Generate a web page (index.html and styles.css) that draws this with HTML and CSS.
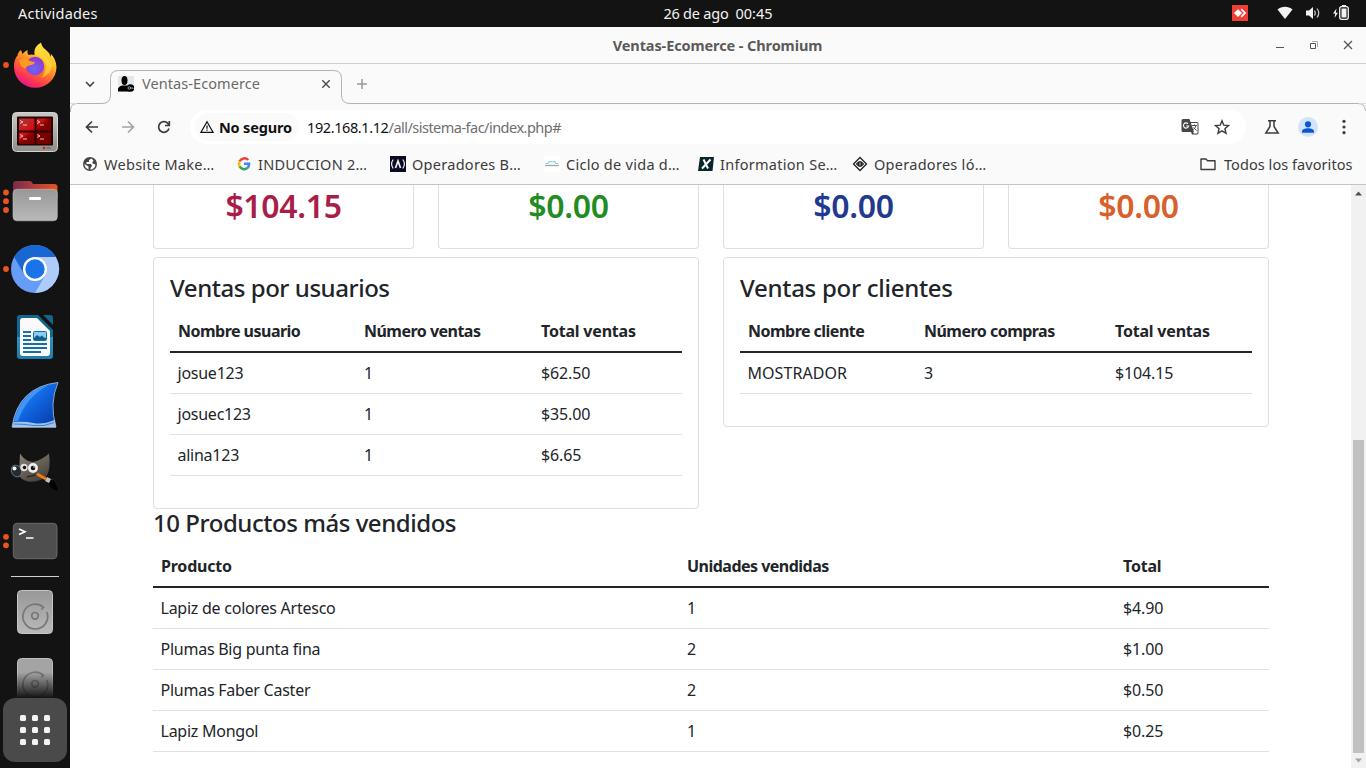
FILE: index.html
```html
<!DOCTYPE html>
<html lang="es">
<head>
<meta charset="utf-8">
<title>Ventas-Ecomerce</title>
<link rel="stylesheet" href="styles.css">
</head>
<body>
<div class="desktop">
  <header class="topbar">
    <span class="activities">Actividades</span>
    <span class="clock"><span>26 de ago</span><span class="time">00:45</span></span>
    <svg class="tray" viewBox="0 0 134 27">
      <rect y="5" width="16" height="16" fill="#ef3e35"/>
      <path d="M6 9.200 10 13l-4 3.900L2 13z" fill="#fff"/><path d="m8.600 9.700 1.200-1.100 4.400 4.400-4.400 4.400-1.200-1.100 3.200-3.300z" fill="#fff"/>
      <path d="M45.500 9.400c4.200-3.400 10.800-3.400 15 0L53 18.900z" fill="#f2f2f2"/>
      <path d="M74 10.500h3L81 7v12l-4-3.500h-3z" fill="#f2f2f2"/>
      <path d="M82.500 10.500q1.700 2.500 0 5M85 8.500q3.500 4.500 0 9" fill="none" stroke="#c8c8c8" stroke-width="1.200"/>
      <path d="m104.500 8.500-3.500 5h2.200l-.7 4.500 3.500-5.200h-2.200z" fill="#f2f2f2"/>
      <rect x="107.700" y="6.700" width="8.600" height="12.600" rx="2" fill="none" stroke="#f2f2f2" stroke-width="1.300"/>
      <rect x="109.500" y="8.500" width="5" height="9" fill="#f2f2f2"/><rect x="110" y="5" width="4" height="1.500" fill="#f2f2f2"/>
    </svg>
  </header>
  <div class="workspace">
    <nav class="dock">
      <svg class="slot" viewBox="0 0 70 68">
        <defs>
          <linearGradient id="ff" x1=".85" y1="0" x2=".3" y2="1"><stop offset="0" stop-color="#fff24a"/><stop offset=".35" stop-color="#ffc02a"/><stop offset=".62" stop-color="#ff6a2c"/><stop offset=".85" stop-color="#fb2f5c"/><stop offset="1" stop-color="#e0158c"/></linearGradient>
          <radialGradient id="fp" cx=".45" cy=".65" r=".6"><stop offset="0" stop-color="#6a6af4"/><stop offset="1" stop-color="#9137d2"/></radialGradient>
        </defs>
        <circle cx="6" cy="34" r="2.900" fill="#e95420"/>
        <path d="M17.500 25q0-3.500 3.500-6l1.500 4q2-2.500 5-4-.5 3 1 5 3-1 6 0-1.500-8 6.500-12.500 .5 4 4.500 7t5.500 7.500q.5-2-.5-3.500 5.500 5 6 13.500A21 20.500 0 1 1 14 36q-.300-6.500 3-11z" fill="url(#ff)"/>
        <path d="M41 12q-7 5-6 12 9 2 10.500 9t-4.500 14q10-3 11-13-2.500-5-6-8-4-5-5-14z" fill="#ffe23c" opacity=".6"/>
        <circle cx="35" cy="35" r="9.200" fill="url(#fp)"/>
        <path d="M19 29.500q6-4 11 .5 3 1 5 1-1 3-6 3.500-3 1-4 3-5-2-6-8z" fill="#ff9a21"/>
      </svg>
      <svg class="slot" viewBox="0 0 70 68">
        <defs><linearGradient id="tm" x1="0" y1="0" x2="1" y2="1"><stop offset="0" stop-color="#a83a3a"/><stop offset=".4" stop-color="#d40f0f"/><stop offset=".5" stop-color="#850000"/><stop offset="1" stop-color="#6f0000"/></linearGradient>
        <linearGradient id="tf" x2="0" y2="1"><stop offset="0" stop-color="#c9cac5"/><stop offset="1" stop-color="#8e8f8a"/></linearGradient></defs>
        <rect x="12.500" y="13.500" width="45" height="39" rx="4" fill="url(#tf)" stroke="#d3d3cf"/>
        <rect x="17" y="17.500" width="36" height="29" rx="1" fill="#250506"/>
        <rect x="19" y="19.500" width="32" height="25.500" fill="url(#tm)"/>
        <path d="M35.500 19v27M18 32.500h34" stroke="#300" stroke-width="2"/>
        <path d="m20 21.500 3 1.500-3 1.500m3 1.500h4M37 21.500l3 1.500-3 1.500m3 1.500h4M20 35.500l3 1.500-3 1.500m3 1.500h4M37 35.500l3 1.500-3 1.500m3 1.500h4" fill="none" stroke="#f6d6d6" stroke-width=".9"/>
        <circle cx="44" cy="49" r="1.300" fill="#f01010"/><rect x="46.500" y="48" width="4" height="2" fill="#777"/>
      </svg>
      <svg class="slot" viewBox="0 0 70 68">
        <defs><linearGradient id="fo"><stop offset="0" stop-color="#7b2a50"/><stop offset="1" stop-color="#e9541f"/></linearGradient><linearGradient id="gr" x2="0" y2="1"><stop offset="0" stop-color="#989898"/><stop offset="1" stop-color="#b9b9b9"/></linearGradient></defs>
        <g fill="#e95420"><circle cx="6" cy="25.500" r="2.900"/><circle cx="6" cy="34.200" r="2.900"/><circle cx="6" cy="43" r="2.900"/></g>
        <path d="M13 30V17q0-3 3-3h14q1.500 0 3 3h21q3.500 0 3.500 3v10z" fill="url(#fo)"/>
        <rect x="13" y="22.300" width="44.300" height="31.500" rx="4" fill="url(#gr)" stroke="#c2c2c2" stroke-width=".6"/>
        <rect x="29" y="30" width="12" height="3" rx="1.200" fill="#fff"/>
      </svg>
      <svg class="slot" viewBox="0 0 70 68">
        <circle cx="6" cy="34" r="2.900" fill="#e95420"/>
        <circle cx="35" cy="34" r="24" fill="#669df6"/>
        <path d="M35 22h20.800A24 24 0 0 1 35 58l10.400-18z" fill="#aecbfa"/>
        <path d="M14.200 22A24 24 0 0 1 55.800 22H35a12 12 0 0 0-10.400 18z" fill="#1967d2"/>
        <circle cx="35" cy="34" r="12" fill="#fff"/><circle cx="35" cy="34" r="9.700" fill="#1a73e8"/>
      </svg>
      <svg class="slot" viewBox="0 0 70 68">
        <defs><linearGradient id="wr" x2="0" y2="1"><stop offset=".5" stop-color="#0f6893"/><stop offset=".5" stop-color="#3191c4"/><stop offset="1" stop-color="#1b7dae"/></linearGradient></defs>
        <path d="M43 12h7q3 0 3 3v7z" fill="#15648c"/>
        <path d="M20 12h18l15 15v26q0 3-3 3H20q-3 0-3-3V15q0-3 3-3z" fill="url(#wr)"/>
        <path d="M22.500 15H37l13 13v22q0 3-3 3H22.500q-2.500 0-2.500-3V18q0-3 2.500-3z" fill="#fafafa"/>
        <path d="M23 29h8M23 33h8M23 37h8M23 41h24M23 45h24M23 49h18" stroke="#1272a5" stroke-width="2"/>
        <rect x="33.500" y="28.500" width="13" height="9" rx="1" fill="#8acbf4" stroke="#1272a5"/><path d="M34 37v-2l3-3 3 2 2-1.500 2 2 2 .5v2z" fill="#115e8d"/>
      </svg>
      <svg class="slot" viewBox="0 0 70 68">
        <defs><linearGradient id="ws" x2="1" y2="1"><stop offset="0" stop-color="#3a9bfa"/><stop offset=".5" stop-color="#0f64df"/><stop offset="1" stop-color="#0535a0"/></linearGradient></defs>
        <path d="M12 56Q18 16 58 11.500q-9 21-2 44.500z" fill="url(#ws)" stroke="#a6c8ea" stroke-width=".8"/>
        <path d="M14 50Q22 20 48 14.500 26 26 18 50z" fill="#5caeff" opacity=".6"/>
        <path d="M12.500 56.500 13.500 51q11-1 20 1t21-3l1.500 7.500z" fill="#b9d6f2" opacity=".85"/><path d="M14 53q10 0 20 1.500t20-3" fill="none" stroke="#3d82d0"/>
      </svg>
      <svg class="slot" viewBox="0 0 70 68">
        <defs><linearGradient id="gp" x2=".6" y2="1"><stop offset="0" stop-color="#89837a"/><stop offset="1" stop-color="#4a433a"/></linearGradient></defs>
        <path d="M20 14.500q5 8 13 8.500 9-2 16-8.500 2 14-2 22-6 7-19 6-8-2-9-7z" fill="url(#gp)"/>
        <ellipse cx="16.500" cy="32" rx="5" ry="6" fill="#252b31" stroke="#66717c" transform="rotate(-25 16.500 32)"/><circle cx="14.500" cy="29.500" r="2" fill="#fff"/>
        <circle cx="24" cy="28.500" r="3.700" fill="#ddd"/><circle cx="24.500" cy="28.500" r="1.700" fill="#111"/><circle cx="33" cy="29" r="5" fill="#eee"/><circle cx="33" cy="29" r="2.300" fill="#151515"/><circle cx="34" cy="28" r=".7" fill="#fff"/>
        <path d="m27 38 9-2" stroke="#2d2721" stroke-width="1.300"/><path d="m37 35 9 5" stroke="#ed7d17" stroke-width="3"/><path d="m46 40 6 3" stroke="#c0c0c0" stroke-width="4.500"/><path d="M51 40q5 2 7 12-9-2-9-8z" fill="#020202"/>
      </svg>
      <svg class="slot" viewBox="0 0 70 68">
        <circle cx="6" cy="29.800" r="2.900" fill="#e95420"/><circle cx="6" cy="38.300" r="2.900" fill="#e95420"/>
        <rect x="13.300" y="16.300" width="43.700" height="35.400" rx="4" fill="#4e4e4e" stroke="#6a6a6a"/>
        <path d="m19 22 6 2.700-6 2.700M26 31h7.500" fill="none" stroke="#fff" stroke-width="1.600"/>
      </svg>
      <hr class="dock-rule">
      <svg class="slot" viewBox="0 0 70 68">
        <rect x="17.500" y="12.500" width="35" height="43" rx="4" fill="url(#gr)" stroke="#c6c6c6"/>
        <path d="M41.300 31.500 43.500 29.300A12.400 12.400 0 1 0 46.800 34" fill="none" stroke="#777" stroke-width="1.700"/><circle cx="35" cy="37.800" r="3.300" fill="none" stroke="#777" stroke-width="1.700"/>
      </svg>
      <svg class="slot" viewBox="0 0 70 68">
        <defs><linearGradient id="fd" x2="0" y2="1"><stop offset=".35" stop-color="#141414" stop-opacity="0"/><stop offset=".9" stop-color="#141414"/></linearGradient></defs>
        <rect x="17.500" y="12.500" width="35" height="43" rx="4" fill="#a4a4a4" stroke="#c0c0c0"/>
        <path d="M41.300 31.500 43.500 29.300A12.400 12.400 0 1 0 46.800 34" fill="none" stroke="#777" stroke-width="1.700"/><circle cx="35" cy="37.800" r="3.300" fill="none" stroke="#777" stroke-width="1.700"/>
        <rect x="15" y="10" width="40" height="46.500" fill="url(#fd)"/>
      </svg>
      <div class="apps"><i></i><i></i><i></i><i></i><i></i><i></i><i></i><i></i><i></i></div>
    </nav>
    <main class="window">
      <div class="titlebar">
        <span class="title">Ventas-Ecomerce - Chromium</span>
        <svg class="winbtns" viewBox="0 0 96 36" fill="none" stroke="#555">
          <path d="M6 20.500h8M40.500 16.500h5v5h-5z"/><path d="M42 14.500h5.500V20" stroke="#aaa"/><path d="m74 14 8 8m0-8-8 8" stroke-width="1.300"/>
        </svg>
      </div>
      <div class="tabstrip">
        <svg class="tabshape" viewBox="0 0 1296 48" fill="none" stroke="#b2b2b2">
          <path d="M.5 48v-1Q.5 39.500 7 39.500h25q8.500 0 8.500-8.500V14.500q0-8 8-8h215q8 0 8 8V31q0 8.500 8.500 8.500h1008q7 0 7.500 7.500"/>
          <path d="M0 39.500h7M1289 39.500h7" stroke="#dcdcdc"/>
        </svg>
        <svg class="chevron" viewBox="0 0 12 12" fill="none" stroke="#474747" stroke-width="1.600"><path d="m2 4 4 4 4-4"/></svg>
        <svg class="favicon" viewBox="0 0 16 16"><path fill="#e6e6e6" d="M0 0h16v16H0z"/><ellipse cx="6.500" cy="4.500" rx="3" ry="4.500"/><path d="M0 15.500V13q0-2 4-3.500h5q3 1 3 3v3z"/><circle cx="12.500" cy="12" r="3.800"/><circle cx="11.300" cy="12" r="1.300" fill="none" stroke="#ddd" stroke-width=".7"/><path d="M12.500 12h2.500v1" stroke="#ddd" stroke-width=".7" fill="none"/></svg>
        <span class="tabname">Ventas-Ecomerce</span>
        <svg class="tabclose" viewBox="0 0 10 10" stroke="#4d4d4d" stroke-width="1.400"><path d="m1.300 1.300 7.400 7.400m0-7.400L1.300 8.700"/></svg>
        <svg class="newtab" viewBox="0 0 12 12" stroke="#999" stroke-width="1.500"><path d="M6 1v10M1 6h10"/></svg>
      </div>
      <div class="toolbar">
        <div class="nav">
          <svg viewBox="0 0 16 16" fill="none" stroke="#3c3c3c" stroke-width="1.700"><path d="M14 8H3M8 2.500 2.500 8 8 13.500"/></svg>
          <svg viewBox="0 0 16 16" fill="none" stroke="#a5a5a5" stroke-width="1.700"><path d="M2 8h11M8 2.500 13.500 8 8 13.500"/></svg>
          <svg viewBox="0 0 16 16" fill="none" stroke="#3c3c3c" stroke-width="1.700"><path d="M13 9.500A5.300 5.300 0 1 1 12.300 5L13 6"/><path d="M13.300 2v4.500H9"/></svg>
        </div>
        <div class="omnibox">
          <div class="chip">
            <svg viewBox="0 0 14 14" fill="none" stroke="#111" stroke-width="1.200"><path d="M7 1.700 13 12.300H1z"/><path d="M7 5.500v3.200M7 9.600v1.200"/></svg>
            <span>No seguro</span>
          </div>
          <span class="url"><span class="host">192.168.1.12</span>/all/sistema-fac/index.php#</span>
          <svg class="translate" viewBox="0 0 18 18"><path d="M2 1h6.500l1 3H16q1.500 0 1.500 1.500V15q0 1.500-1.500 1.500h-5L10 14H2Q.5 14 .5 12.500v-10Q.5 1 2 1z" fill="#474747"/><path d="M9.900 5H16q.5 0 .5.500V15q0 .5-.5.500h-3l-1-1.500h1z" fill="#fff"/><path d="M7 5.800A2.600 2.600 0 1 0 7.600 8H5.300" fill="none" stroke="#fff" stroke-width="1.100"/><path d="M11 7.500h5M13.500 6.500v1M15 7.500q-.5 3-3.500 4.500M12.500 9.500l3 3" fill="none" stroke="#555"/></svg>
          <svg class="star" viewBox="0 0 16 16" fill="none" stroke="#3c3c3c" stroke-width="1.400"><path d="m8 1.800 1.800 4.400 4.700.4-3.600 3.100 1.100 4.600L8 11.800l-4 2.500 1.100-4.600L1.500 6.600l4.700-.4z"/></svg>
        </div>
        <svg class="flask" viewBox="0 0 16 16" fill="none" stroke="#3c3c3c" stroke-width="1.500"><path d="M4 1.800h8M6 2v5.500L1.800 14h12.400L10 7.500V2"/></svg>
        <svg class="avatar" viewBox="0 0 20 20"><circle cx="10" cy="10" r="10" fill="#d3e3fd"/><circle cx="10" cy="7.300" r="3.100" fill="#0b57d0"/><path d="M4 15.700v-1.400c0-4 12-4 12 0v1.400z" fill="#0b57d0"/></svg>
        <svg class="kebab" viewBox="0 0 4 16" fill="#3c3c3c"><circle cx="2" cy="2.300" r="1.600"/><circle cx="2" cy="8" r="1.600"/><circle cx="2" cy="13.700" r="1.600"/></svg>
      </div>
      <div class="bookmarks">
        <span class="bm"><svg viewBox="0 0 16 16"><circle cx="8" cy="8" r="7" fill="#454545"/><path d="M9.500 2.500 7 4v2H4.500v2H9l1 2-1.500 2v1.800Q13 13 13.500 8.500l-3-1V6l1-1.500z" fill="#fff"/><path d="m2.500 8 4 2.500v3Q2.500 12 2.500 8z" fill="#fff"/></svg><span>Website Make…</span></span>
        <span class="bm"><svg viewBox="0 0 16 16" fill="none" stroke-width="2.500"><path d="M12.200 4A5.300 5.300 0 0 0 3.600 5.300" stroke="#ea4335"/><path d="M3.600 5.300a5.300 5.300 0 0 0 0 5" stroke="#fbbc05"/><path d="M3.600 10.300a5.300 5.300 0 0 0 7.800 1.800" stroke="#34a853"/><path d="M8 7.800h5.100q0 3-1.700 4.300" stroke="#4285f4"/></svg><span>INDUCCION 2…</span></span>
        <span class="bm"><svg viewBox="0 0 16 16" fill="none"><path fill="#0a0a23" d="M0 0h16v16H0z"/><path d="M3.200 3.500Q0 8 3.200 12.500M12.800 3.500q3.200 4.500 0 9" stroke="#eee" stroke-width="1.200"/><path d="m5.500 12 2.500-7 2.500 7M8 5v3" stroke="#eee" stroke-width="1.700"/></svg><span>Operadores B…</span></span>
        <span class="bm"><svg viewBox="0 0 16 16" fill="none"><path fill="#fff" d="M0 0h16v16H0z"/><path d="M1.500 7.500H4Q5 4.500 8 6q3-1.500 4 1.500h2" stroke="#8bd0e4" stroke-width="1.200"/><path d="M1 9.500h14" stroke="#a2a2a2" stroke-width="1.300"/></svg><span>Ciclo de vida d…</span></span>
        <span class="bm"><svg viewBox="0 0 16 16" fill="none"><path fill="#0b262b" d="M2 1h14l-1.500 14H0z"/><path d="m5.500 3.500 4.500 9M12.500 3.500l-8.500 9" stroke="#fff" stroke-width="2"/></svg><span>Information Se…</span></span>
        <span class="bm"><svg viewBox="0 0 16 16" fill="none" stroke="#222"><path d="m8 1.500 6.500 6.500L8 14.500 1.500 8z" stroke-width="1.300"/><path d="m4.500 8 2-2h3l2 2-2 2h-3zM6.500 6v4M9.500 6v4M8 5v6" stroke-width="1.100"/></svg><span>Operadores ló…</span></span>
        <span class="bm all"><svg viewBox="0 0 16 16" fill="none" stroke="#3c3c3c" stroke-width="1.400"><path d="M1 3h5l1.500 1.700H15V13.500H1z" stroke-linejoin="round"/></svg><span>Todos los favoritos</span></span>
      </div>
      <div class="viewport">
        <div class="page">
          <div class="cards">
            <div class="card"><h2 class="crimson">$104.15</h2></div>
            <div class="card"><h2 class="green">$0.00</h2></div>
            <div class="card"><h2 class="navy">$0.00</h2></div>
            <div class="card"><h2 class="orange">$0.00</h2></div>
          </div>
          <div class="panels">
            <section class="panel">
              <h4>Ventas por usuarios</h4>
              <table class="table users">
                <thead><tr><th>Nombre usuario</th><th>Número ventas</th><th class="loose">Total ventas</th></tr></thead>
                <tbody>
                  <tr><td>josue123</td><td>1</td><td>$62.50</td></tr>
                  <tr><td>josuec123</td><td>1</td><td>$35.00</td></tr>
                  <tr><td>alina123</td><td>1</td><td>$6.65</td></tr>
                </tbody>
              </table>
            </section>
            <section class="panel">
              <h4 class="loose">Ventas por clientes</h4>
              <table class="table clients">
                <thead><tr><th>Nombre cliente</th><th>Número compras</th><th class="loose">Total ventas</th></tr></thead>
                <tbody><tr><td>MOSTRADOR</td><td>3</td><td>$104.15</td></tr></tbody>
              </table>
            </section>
          </div>
          <h4>10 Productos más vendidos</h4>
          <table class="table products">
            <thead><tr><th class="loose">Producto</th><th>Unidades vendidas</th><th class="loose">Total</th></tr></thead>
            <tbody>
              <tr><td>Lapiz de colores Artesco</td><td>1</td><td>$4.90</td></tr>
              <tr><td>Plumas Big punta fina</td><td>2</td><td>$1.00</td></tr>
              <tr><td>Plumas Faber Caster</td><td>2</td><td>$0.50</td></tr>
              <tr><td>Lapiz Mongol</td><td>1</td><td>$0.25</td></tr>
            </tbody>
          </table>
        </div>
        <div class="scrollbar">
          <svg viewBox="0 0 15 17"><path d="M4 10.500 7.500 6.500 11 10.500z" fill="#505050"/></svg>
          <div class="thumb"></div>
          <svg viewBox="0 0 15 15"><path d="M4 5.500h7L7.500 9.500z" fill="#a3a3a3"/></svg>
        </div>
      </div>
    </main>
  </div>
</div>
</body>
</html>
```
FILE: styles.css
```css
* { box-sizing: border-box; }
body { margin: 0; font-family: "Noto Sans", "Open Sans", sans-serif; font-size: 16px; color: #212529; overflow: hidden; }
svg { display: block; flex: none; }

.desktop { width: 1366px; height: 768px; display: flex; flex-direction: column; background: #131313; }
.topbar { height: 27px; display: flex; align-items: center; justify-content: space-between; color: #f2f2f2; font-size: 14.5px; line-height: 24px; padding: 0 0 0 18px; }
.topbar span { padding-bottom: 1px; }
.activities { width: 134px; letter-spacing: .2px; }
.clock { flex: 1; display: flex; justify-content: center; gap: 7px; margin-left: 52px; letter-spacing: -.22px; }
.time { letter-spacing: 0; }
.tray { width: 134px; height: 27px; }

.workspace { flex: 1; display: flex; min-height: 0; }
.dock { width: 70px; padding-top: 4px; position: relative; overflow: hidden; }
.slot { width: 70px; height: 68px; }
.dock-rule { width: 48px; height: 1px; margin: 1px 11px; border: 0; background: #d0d0d0; }
.apps { position: absolute; left: 3px; bottom: 6px; width: 64px; height: 64px; border-radius: 12px; background: #4a4a4a; padding: 17px; display: grid; grid-template-columns: repeat(3, 6px); gap: 6px; }
.apps i { width: 6px; height: 6px; border-radius: 1.5px; background: #f4f4f2; }

.window { flex: 1; display: flex; flex-direction: column; background: #fafafa; min-width: 0; white-space: nowrap; }
.titlebar { height: 37px; border-bottom: 1px solid #d0d0d0; display: flex; align-items: center; }
.title { flex: 1; padding-left: 95px; text-align: center; font-weight: 700; font-size: 14.5px; color: #5b5b5b; letter-spacing: -.1px; }
.winbtns { width: 96px; height: 36px; }

.tabstrip { height: 40px; display: flex; align-items: center; position: relative; padding-left: 14px; font-size: 14.5px; color: #6a6a6a; }
.tabshape { position: absolute; left: 0; top: 0; width: 1296px; height: 48px; }
.chevron { width: 12px; height: 12px; }
.favicon { width: 16px; height: 16px; margin-left: 22px; }
.tabname { width: 187px; padding: 0 0 2px 8px; letter-spacing: .07px; }
.tabclose { width: 10px; height: 10px; }
.newtab { width: 12px; height: 12px; margin-left: 25px; }

.toolbar { height: 46px; display: flex; align-items: center; padding-left: 14px; }
.nav { width: 106px; display: flex; gap: 20px; }
.nav svg { width: 16px; height: 16px; }
.omnibox { width: 1056px; height: 34px; border-radius: 17px; background: #fff; display: flex; align-items: center; font-size: 14.5px; }
.omnibox span { padding-bottom: 1px; }
.chip { width: 104px; height: 28px; margin-left: 5px; padding-left: 5px; border-radius: 14px; background: #fafafa; display: flex; align-items: center; gap: 5px; color: #111; font-weight: 700; letter-spacing: -.18px; }
.chip svg { width: 14px; height: 14px; }
.url { flex: 1; padding-left: 8px; color: #6e6e6e; letter-spacing: -.52px; }
.host { color: #111; letter-spacing: -.4px; }
.translate { width: 18px; height: 18px; }
.star { width: 16px; height: 16px; margin: 0 16px 0 15px; }
.flask { width: 16px; height: 16px; margin-left: 18px; }
.avatar { width: 20px; height: 20px; margin-left: 18px; }
.kebab { width: 4px; height: 16px; margin-left: 24px; }

.bookmarks { height: 35px; padding: 0 14px 6px 12px; border-bottom: 1px solid #c4c4c4; display: flex; align-items: center; font-size: 14.5px; color: #3c3c3c; }
.bm { width: 154px; display: flex; align-items: center; gap: 6px; letter-spacing: .28px; }
.bm span { padding-bottom: 1px; }
.bm svg { width: 16px; height: 16px; }
.all { width: 152px; margin-left: auto; gap: 8px; letter-spacing: .06px; }

.viewport { flex: 1; display: flex; background: #fff; min-height: 0; overflow: hidden; }
.page { width: 1281px; padding: 0 82px 0 83px; }
.cards { display: grid; grid-template-columns: repeat(4, 261px); gap: 24px; }
.card { height: 64px; padding-top: 2px; border: 1px solid #dfdfdf; border-top: 0; border-radius: 0 0 4px 4px; text-align: center; }
h2, h4 { margin: 0 0 8px; font-weight: 500; line-height: 1.2; }
h2 { font-size: 32px; font-weight: 600; letter-spacing: -.35px; }
h4 { font-size: 24px; letter-spacing: -.46px; }
h4.loose { letter-spacing: -.28px; }
.crimson { color: #a91d4b; }
.green { color: #228b22; }
.navy { color: #213a8f; }
.orange { color: #d9602b; }
.panels { display: grid; grid-template-columns: 546px 546px; gap: 24px; align-items: start; margin-top: 8px; }
.panel { border: 1px solid #dfdfdf; border-radius: 4px; padding: 16px; }
.table { border-collapse: separate; border-spacing: 0; table-layout: fixed; line-height: 24px; }
.table th, .table td { padding: 8px; text-align: left; border-bottom: 1px solid #dee2e6; letter-spacing: -.25px; }
.table td:first-child { padding-left: 7.5px; }
.table td:last-child { letter-spacing: -.15px; }
.table th { border-bottom: 2px solid #212529; font-weight: 700; letter-spacing: -.52px; }
.table th.loose { letter-spacing: -.2px; }
.panel .table { width: 512px; margin-bottom: 16px; }
.products { width: 1116px; }
.users th:nth-child(1) { width: 186px; }
.users th:nth-child(2) { width: 177px; }
.clients th:nth-child(1) { width: 176px; }
.clients th:nth-child(2) { width: 191px; }
.clients td:first-child { letter-spacing: .05px; }
.products th:nth-child(1) { width: 526px; }
.products th:nth-child(2) { width: 436px; }

.scrollbar { width: 15px; background: #f1f1f1; display: flex; flex-direction: column; }
.scrollbar svg { width: 15px; }
.thumb { width: 11px; height: 313px; margin: auto 2px 0; background: #c1c1c1; }
```
